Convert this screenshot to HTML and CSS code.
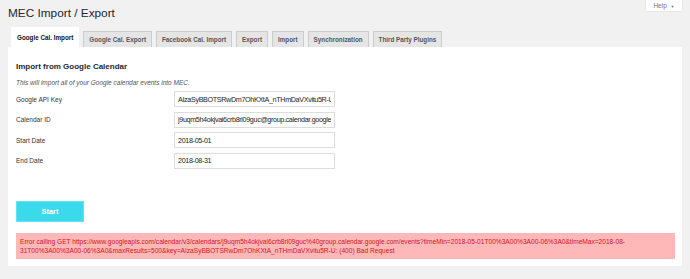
FILE: index.html
```html
<!DOCTYPE html>
<html lang="en">
<head>
<meta charset="UTF-8" />
<title>MEC Import / Export</title>
<link rel="stylesheet" href="styles.css">
</head>
<body>
<div class="help-bar">
  <button class="help-btn">Help <span class="caret">▼</span></button>
</div>
<div class="wrap">
  <h1>MEC Import / Export</h1>
  <nav class="tabs">
    <a class="tab active">Google Cal. Import</a>
    <a class="tab">Google Cal. Export</a>
    <a class="tab">Facebook Cal. Import</a>
    <a class="tab">Export</a>
    <a class="tab">Import</a>
    <a class="tab">Synchronization</a>
    <a class="tab">Third Party Plugins</a>
  </nav>
  <div class="panel">
    <h3>Import from Google Calendar</h3>
    <p class="desc">This will import all of your Google calendar events into MEC.</p>
    <div class="row">
      <label>Google API Key</label>
      <input value="AIzaSyBBOTSRwDm7OhKXtA_nTHmDaVXvitu5R-U">
    </div>
    <div class="row">
      <label>Calendar ID</label>
      <input value="j9uqm5h4okjvai6crb8rl09guc@group.calendar.google.com">
    </div>
    <div class="row">
      <label>Start Date</label>
      <input value="2018-05-01">
    </div>
    <div class="row">
      <label>End Date</label>
      <input value="2018-08-31">
    </div>
    <button class="start">Start</button>
    <div class="error">Error calling GET https://www.googleapis.com/calendar/v3/calendars/j9uqm5h4okjvai6crb8rl09guc%40group.calendar.google.com/events?timeMin=2018-05-01T00%3A00%3A00-06%3A0&amp;timeMax=2018-08-31T00%3A00%3A00-06%3A0&amp;maxResults=500&amp;key=AIzaSyBBOTSRwDm7OhKXtA_nTHmDaVXvitu5R-U: (400) Bad Request</div>
  </div>
</div>
</body>
</html>
```

FILE: styles.css
```css
body {
  margin: 0;
  background: #f1f1f1;
  font-family: "Liberation Sans", Arial, sans-serif;
  color: #23282d;
  font-size: 7px;
}

.help-bar {
  display: flex;
  justify-content: flex-end;
  padding-right: 8px;
  height: 0;
}

.help-btn {
  background: #fff;
  border: none;
  box-shadow: 0 0 1px rgba(0,0,0,0.2);
  font-family: inherit;
  font-size: 6.5px;
  color: #72777c;
  width: 36px;
  height: 11px;
  padding: 0;
}

.help-btn .caret {
  font-size: 4px;
  margin-left: 2px;
}

.wrap {
  padding: 0 8px;
}

h1 {
  margin: 0;
  padding-top: 5px;
  font-size: 11.8px;
  font-weight: 400;
  line-height: 17px;
  color: #23282d;
}

.tabs {
  display: flex;
  gap: 4px;
  margin-top: 5px;
  padding-left: 3px;
}

.tab {
  background: #e5e5e5;
  border: 1px solid #ccc;
  border-bottom: none;
  font-size: 6.3px;
  font-weight: 700;
  color: #555;
  padding: 0 5px;
  height: 15px;
  line-height: 16px;
  margin-top: 4px;
}

.tab.active {
  background: #fff;
  border-color: #fff;
  color: #111;
  height: 19px;
  line-height: 20px;
  margin-top: 0;
}

.panel {
  background: #fff;
  width: 658px;
  height: 211px;
  padding: 8px 8px 0 8px;
}

h3 {
  margin: 0;
  padding-top: 6px;
  font-size: 8px;
  font-weight: 700;
  line-height: 11px;
  color: #23282d;
}

.desc {
  margin: 7px 0 0;
  font-size: 6.5px;
  font-style: italic;
  color: #555;
  line-height: 8px;
}

.row {
  display: flex;
  align-items: center;
  height: 16px;
  margin-top: 4px;
}

.row + .row {
  margin-top: 4.5px;
}

.row label {
  width: 158px;
  font-size: 6.5px;
  color: #333;
}

.row input {
  box-sizing: border-box;
  width: 161px;
  height: 16px;
  border: 1px solid #ddd;
  padding: 0 3px;
  font-family: inherit;
  font-size: 7.2px;
  letter-spacing: -0.35px;
  color: #222;
}

.start {
  display: block;
  margin-top: 32px;
  width: 68px;
  height: 21px;
  background: #3ad9eb;
  border: 1px solid #5fe6f0;
  color: #fff;
  font-family: inherit;
  font-size: 7.5px;
  font-weight: 700;
}

.error {
  margin-top: 11px;
  width: 659px;
  height: 26px;
  box-sizing: border-box;
  background: #ffb8b8;
  color: #d0171f;
  font-size: 6.6px;
  line-height: 9px;
  padding: 4px 5px 0 4px;
}
```
